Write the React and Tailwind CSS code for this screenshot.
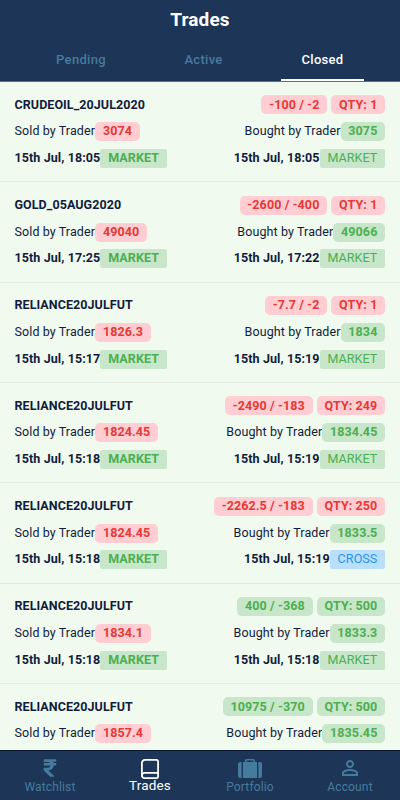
import React from 'react';
import clsx from 'clsx';
import { FaRupeeSign } from 'react-icons/fa';
import { MdPersonOutline } from 'react-icons/md';

const trades = [
  { name: 'CRUDEOIL_20JUL2020', pnl: '-100 / -2', qty: 1, sell: '3074', buy: '3075', soldAt: '18:05', boughtAt: '18:05' },
  { name: 'GOLD_05AUG2020', pnl: '-2600 / -400', qty: 1, sell: '49040', buy: '49066', soldAt: '17:25', boughtAt: '17:22' },
  { name: 'RELIANCE20JULFUT', pnl: '-7.7 / -2', qty: 1, sell: '1826.3', buy: '1834', soldAt: '15:17', boughtAt: '15:19' },
  { name: 'RELIANCE20JULFUT', pnl: '-2490 / -183', qty: 249, sell: '1824.45', buy: '1834.45', soldAt: '15:18', boughtAt: '15:19' },
  { name: 'RELIANCE20JULFUT', pnl: '-2262.5 / -183', qty: 250, sell: '1824.45', buy: '1833.5', soldAt: '15:18', boughtAt: '15:19', cross: true },
  { name: 'RELIANCE20JULFUT', pnl: '400 / -368', qty: 500, sell: '1834.1', buy: '1833.3', soldAt: '15:18', boughtAt: '15:18' },
  { name: 'RELIANCE20JULFUT', pnl: '10975 / -370', qty: 500, sell: '1857.4', buy: '1835.45' },
];

const tones = {
  red: 'bg-[#ffcdd2] text-[#e53935]',
  green: 'bg-[#c8e6c9] text-[#4caf50]',
  blue: 'bg-[#bbdefb] text-[#2196f3]',
};

const Badge = ({ tone, square, light, children }) => (
  <span
    className={clsx(
      'flex h-[19px] items-center px-[7.8px]',
      square ? 'rounded-[2px]' : 'rounded-[5px]',
      light ? 'font-normal' : 'font-bold',
      tones[tone]
    )}
  >
    {children}
  </span>
);

const TradeRow = ({ trade }) => {
  const tone = trade.pnl.startsWith('-') ? 'red' : 'green';

  return (
    <div className="flex h-[100.35px] shrink-0 flex-col gap-[7.8px] border-b border-[#e3ede2] pr-[14.8px] pl-[14.5px] pt-[13.4px]">
      <div className="flex h-[19px] items-center justify-between">
        <span className="font-bold tracking-[0.07px]">{trade.name}</span>
        <div className="flex gap-1">
          <Badge tone={tone}>{trade.pnl}</Badge>
          <Badge tone={tone}>QTY: {trade.qty}</Badge>
        </div>
      </div>
      <div className="flex h-[19px] items-center justify-between">
        <div className="flex items-center">
          <span>Sold by Trader</span>
          <Badge tone="red">{trade.sell}</Badge>
        </div>
        <div className="flex items-center">
          <span>Bought by Trader</span>
          <Badge tone="green">{trade.buy}</Badge>
        </div>
      </div>
      {trade.soldAt && (
        <div className="flex h-[19px] items-center justify-between">
          <div className="flex items-center">
            <span className="font-bold">15th Jul, {trade.soldAt}</span>
            <Badge tone="green" square>MARKET</Badge>
          </div>
          <div className="flex items-center">
            <span className="font-bold">15th Jul, {trade.boughtAt}</span>
            <Badge tone={trade.cross ? 'blue' : 'green'} square light>
              {trade.cross ? 'CROSS' : 'MARKET'}
            </Badge>
          </div>
        </div>
      )}
    </div>
  );
};

const BookIcon = () => (
  <svg width="18" height="20" viewBox="0 0 18 20" fill="none" stroke="currentColor" strokeWidth="1.8">
    <path d="M4 .9H15.5A1.5 1.5 0 0 1 17.1 2.4V17.6A1.5 1.5 0 0 1 15.5 19.1H3.6A2.7 2.7 0 0 1 .9 16.4V4A3.1 3.1 0 0 1 4 .9Z" />
    <path d="M1.1 16A2.6 2.6 0 0 1 3.6 13.9H17" />
  </svg>
);

const SuitcaseIcon = () => (
  <svg width="24" height="19" viewBox="0 0 24 19" fill="currentColor">
    <path d="M3.6 3V19H2.5A2.5 2.5 0 0 1 0 16.5V5.5A2.5 2.5 0 0 1 2.5 3Z" />
    <path d="M20.4 3V19H21.5A2.5 2.5 0 0 0 24 16.5V5.5A2.5 2.5 0 0 0 21.5 3Z" />
    <path d="M5 3H7V1.5A1.5 1.5 0 0 1 8.5 0H15.5A1.5 1.5 0 0 1 17 1.5V3H19V19H5ZM8.6 3H15.4V1.5H8.6Z" />
  </svg>
);

const navItems = [
  { label: 'Watchlist', icon: <FaRupeeSign size={20} className="-mt-px" /> },
  { label: 'Trades', icon: <BookIcon />, active: true },
  { label: 'Portfolio', icon: <SuitcaseIcon /> },
  { label: 'Account', icon: <MdPersonOutline size={24} className="-mt-[3px]" /> },
];

const App = () => (
  <div className="flex h-screen w-full flex-col overflow-hidden bg-[#f0faee] font-['Roboto',sans-serif] text-[12.5px] tracking-[0.1px] text-[#111c3d]">
    <header className="h-[82px] shrink-0 border-b border-[#55718f] bg-[#1d3557] text-white">
      <h1 className="h-10 text-center text-[19px] leading-10 font-bold">Trades</h1>
      <nav className="flex h-[41px] justify-between pr-[36px] pl-[39px] text-[13px] leading-10 font-medium tracking-[0.3px] text-[#457b9d]">
        <span className="w-[84px] text-center">Pending</span>
        <span className="w-[84px] pl-[3px] text-center">Active</span>
        <span className="w-[83px] border-b-2 border-white text-center text-white">Closed</span>
      </nav>
    </header>

    <main className="flex min-h-0 flex-1 flex-col overflow-hidden">
      {trades.map((trade, i) => (
        <TradeRow key={i} trade={trade} />
      ))}
    </main>

    <footer className="grid h-[50px] shrink-0 grid-cols-4 border-t border-[#081530] bg-[#1d3557] text-[12px] tracking-[0.15px] text-[#457b9d]">
      {navItems.map((item) => (
        <div key={item.label} className={clsx('flex flex-col items-center', item.active && 'text-[13.5px] text-white')}>
          <div className="flex h-[27px] items-start justify-center pt-2">{item.icon}</div>
          <span className={item.active ? 'leading-[15px]' : 'leading-[18px]'}>{item.label}</span>
        </div>
      ))}
    </footer>
  </div>
);

export default App;
